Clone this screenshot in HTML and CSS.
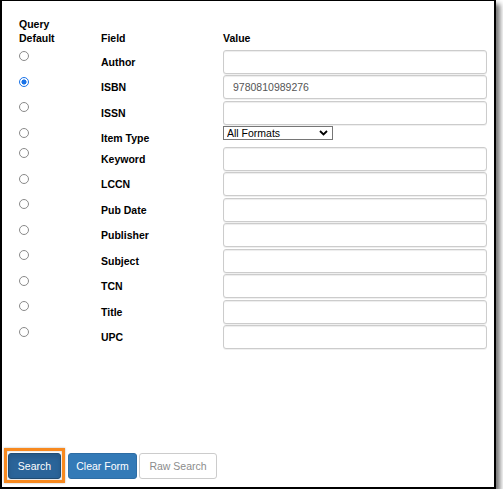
FILE: index.html
```html
<!DOCTYPE html>
<html>
<head>
<meta charset="utf-8">
<link rel="stylesheet" href="styles.css">
</head>
<body>
<div class="frame">
  <table class="fields">
    <colgroup><col class="col-def"><col class="col-field"><col class="col-val"></colgroup>
    <thead>
      <tr><th class="c-def">Query<br>Default</th><th>Field</th><th>Value</th></tr>
    </thead>
    <tbody>
      <tr><td class="c-def"><input type="radio" name="qd"></td><td class="lbl">Author</td><td class="val"><input class="fc" type="text"></td></tr>
      <tr><td class="c-def"><input type="radio" name="qd" checked></td><td class="lbl">ISBN</td><td class="val"><input class="fc" type="text" value="9780810989276"></td></tr>
      <tr><td class="c-def"><input type="radio" name="qd"></td><td class="lbl">ISSN</td><td class="val"><input class="fc" type="text"></td></tr>
      <tr><td class="c-def"><input type="radio" name="qd"></td><td class="lbl">Item Type</td><td class="val"><span class="sel-wrap"><select class="sel"><option>All Formats</option></select><svg class="chev" width="9" height="6" viewBox="0 0 9 6"><path d="M1 1 L4.5 4.5 L8 1" fill="none" stroke="#000" stroke-width="1.8"/></svg></span></td></tr>
      <tr><td class="c-def"><input type="radio" name="qd"></td><td class="lbl">Keyword</td><td class="val"><input class="fc" type="text"></td></tr>
      <tr><td class="c-def"><input type="radio" name="qd"></td><td class="lbl">LCCN</td><td class="val"><input class="fc" type="text"></td></tr>
      <tr><td class="c-def"><input type="radio" name="qd"></td><td class="lbl">Pub Date</td><td class="val"><input class="fc" type="text"></td></tr>
      <tr><td class="c-def"><input type="radio" name="qd"></td><td class="lbl">Publisher</td><td class="val"><input class="fc" type="text"></td></tr>
      <tr><td class="c-def"><input type="radio" name="qd"></td><td class="lbl">Subject</td><td class="val"><input class="fc" type="text"></td></tr>
      <tr><td class="c-def"><input type="radio" name="qd"></td><td class="lbl">TCN</td><td class="val"><input class="fc" type="text"></td></tr>
      <tr><td class="c-def"><input type="radio" name="qd"></td><td class="lbl">Title</td><td class="val"><input class="fc" type="text"></td></tr>
      <tr><td class="c-def"><input type="radio" name="qd"></td><td class="lbl">UPC</td><td class="val"><input class="fc" type="text"></td></tr>
    </tbody>
  </table>
  <div class="actions">
    <span class="hl-wrap"><button class="btn btn-primary active b-search">Search</button><span class="hl"></span></span>
    <button class="btn btn-primary b-clear">Clear Form</button>
    <button class="btn btn-default b-raw" disabled>Raw Search</button>
  </div>
</div>
</body>
</html>
```
FILE: styles.css
```css
* { box-sizing: border-box; }
html, body { margin: 0; padding: 0; background: #fff; }
body {
  font-family: "Liberation Sans", Arial, sans-serif;
  font-size: 10.5px;
  line-height: 14.5px;
  color: #000;
}
.frame {
  width: 496px;
  height: 489px;
  border-style: solid;
  border-color: #000;
  border-width: 1px 2px 2px 2px;
  box-shadow: 4px 4px 5px rgba(0,0,0,0.55);
  display: flex;
  flex-direction: column;
  background: #fff;
}
.fields {
  border-collapse: collapse;
  table-layout: fixed;
  width: 485px;
}
.col-def { width: 99px; }
.col-field { width: 122px; }
.col-val { width: 264px; }
.fields th {
  text-align: left;
  vertical-align: bottom;
  font-weight: bold;
  padding: 15.5px 0 2.5px 0;
}
.fields td {
  padding: 1.5px 0 0 0;
  vertical-align: top;
}
.fields .c-def { padding-left: 17px; }
.lbl {
  font-weight: bold;
}
.fields td.lbl { padding: 6.5px 0 0 0; line-height: 14px; }
input[type="radio"] {
  -webkit-appearance: none;
  appearance: none;
  width: 10px;
  height: 10px;
  margin: 1.5px 0 0 0;
  border: 1px solid #8a8a8a;
  border-radius: 50%;
  background: #fff;
  display: block;
}
input[type="radio"]:checked {
  border-color: #1a73e8;
  background: radial-gradient(circle, #1a73e8 0, #1a73e8 2.3px, #fff 2.8px);
}
.fc {
  display: block;
  width: 264px;
  height: 24px;
  border: 1px solid #ccc;
  border-radius: 3px;
  box-shadow: inset 0 1px 1px rgba(0,0,0,0.075), 0 1px 0 rgba(0,0,0,0.06);
  padding: 0 9px;
  font-family: "Liberation Sans", Arial, sans-serif;
  font-size: 10.5px;
  color: #555;
  outline: none;
}
.sel-wrap {
  position: relative;
  display: block;
  width: 110px;
  height: 14px;
}
.sel {
  -webkit-appearance: none;
  appearance: none;
  display: block;
  width: 110px;
  height: 14px;
  border: 1px solid #767676;
  border-radius: 0;
  background: #fff;
  padding: 0 0 0 3px;
  margin: 0;
  font-family: "Liberation Sans", Arial, sans-serif;
  font-size: 10.5px;
  line-height: 12px;
  color: #000;
}
.chev {
  position: absolute;
  left: 96px;
  top: 4px;
  pointer-events: none;
}
.actions {
  margin-top: auto;
  padding: 0 0 8px 6px;
  display: flex;
  align-items: center;
}
.btn {
  height: 26px;
  border: 1px solid transparent;
  border-radius: 3px;
  font-family: "Liberation Sans", Arial, sans-serif;
  font-size: 10.5px;
  padding: 0;
  text-align: center;
  margin: 0;
}
.btn-primary {
  background: #337ab7;
  border-color: #2e6da4;
  color: #fff;
}
.btn-primary.active {
  background: #2a6499;
  border-color: #204d74;
  box-shadow: inset 0 3px 5px rgba(0,0,0,0.125);
}
.btn-default {
  background: #fff;
  border-color: #ccc;
  color: #8c8c8c;
}
.hl-wrap {
  position: relative;
  display: block;
}
.hl {
  position: absolute;
  left: -4px;
  top: -5px;
  right: -4px;
  bottom: -4px;
  border: 3px solid #f7891f;
  box-shadow: 0 0 2px rgba(0,0,0,0.3), inset 0 0 2px rgba(0,0,0,0.3);
}
.b-search { width: 53px; display: block; }
.b-clear { width: 69px; margin-left: 7px; }
.b-raw { width: 78px; margin-left: 2px; }
```
